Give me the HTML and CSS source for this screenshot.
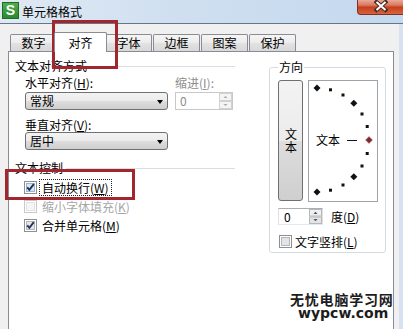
FILE: index.html
```html
<!DOCTYPE html>
<html lang="zh-CN">
<head>
<meta charset="utf-8">
<title>单元格格式</title>
<link rel="stylesheet" href="styles.css">
</head>
<body>
<div class="window">
  <div class="titlebar">
    <span class="app-icon">S</span>
    <span class="title">单元格格式</span>
    <div class="close">
      <svg width="46" height="15" viewBox="0 0 46 15">
        <path d="M19.5 2 L28.5 10 M28.5 2 L19.5 10" stroke="#4a2a24" stroke-width="4" stroke-linecap="square"/>
        <path d="M19.5 2 L28.5 10 M28.5 2 L19.5 10" stroke="#fff" stroke-width="2"/>
      </svg>
    </div>
  </div>
  <div class="client">
    <div class="tabs">
      <div class="tab">数字</div>
      <div class="tab active">对齐</div>
      <div class="tab">字体</div>
      <div class="tab">边框</div>
      <div class="tab">图案</div>
      <div class="tab">保护</div>
    </div>
    <div class="panel">
      <div class="left">
        <div class="group-title"><span>文本对齐方式</span></div>
        <div class="field-row">
          <div class="field field-h">
            <div class="label">水平对齐(<u>H</u>):</div>
            <div class="combo"><span>常规</span><i class="arrow"></i></div>
          </div>
          <div class="field field-indent">
            <div class="label disabled">缩进(<u>I</u>):</div>
            <div class="spin spin-indent disabled">
              <span class="spin-val">0</span>
              <div class="spin-btns">
                <svg width="13" height="16" viewBox="0 0 13 16">
                  <rect x="0.5" y="0.5" width="12" height="7" fill="#f4f4f4" stroke="#d2d2d2"/>
                  <rect x="0.5" y="8.5" width="12" height="7" fill="#f4f4f4" stroke="#d2d2d2"/>
                  <path d="M4.5 5 L6.5 3 L8.5 5 Z" fill="#a8a8a8"/>
                  <path d="M4.5 11 L6.5 13 L8.5 11 Z" fill="#a8a8a8"/>
                </svg>
              </div>
            </div>
          </div>
        </div>
        <div class="field field-v">
          <div class="label">垂直对齐(<u>V</u>):</div>
          <div class="combo"><span>居中</span><i class="arrow"></i></div>
        </div>
        <div class="group-title group-title-2"><span>文本控制</span></div>
        <div class="checks">
          <div class="check-row">
            <svg class="cb" width="13" height="13" viewBox="0 0 13 13">
              <rect x="0.5" y="0.5" width="12" height="12" fill="#fff" stroke="#8e8f8f"/>
              <rect x="2.5" y="2.5" width="8" height="8" fill="#d6e8f8" stroke="#9ab4cf"/>
              <path d="M3.2 6.3 L5.4 8.8 L9.8 3.2" stroke="#1b2e58" stroke-width="1.9" fill="none"/>
            </svg>
            <span class="check-label focused">自动换行(<u>W</u>)</span>
          </div>
          <div class="check-row disabled">
            <svg class="cb" width="13" height="13" viewBox="0 0 13 13">
              <rect x="0.5" y="0.5" width="12" height="12" fill="#fff" stroke="#c8c8c8"/>
              <rect x="2.5" y="2.5" width="8" height="8" fill="#f6f6f6" stroke="#e2e2e2"/>
            </svg>
            <span class="check-label">缩小字体填充(<u>K</u>)</span>
          </div>
          <div class="check-row">
            <svg class="cb" width="13" height="13" viewBox="0 0 13 13">
              <rect x="0.5" y="0.5" width="12" height="12" fill="#fff" stroke="#8e8f8f"/>
              <rect x="2.5" y="2.5" width="8" height="8" fill="#e4e6ea" stroke="#b3b6bc"/>
              <path d="M3.2 6.3 L5.4 8.8 L9.8 3.2" stroke="#2a3450" stroke-width="1.9" fill="none"/>
            </svg>
            <span class="check-label">合并单元格(<u>M</u>)</span>
          </div>
        </div>
      </div>
      <fieldset class="direction">
        <legend>方向</legend>
        <div class="dir-main">
          <div class="vbutton"><span class="vtext">文本</span></div>
          <div class="dial">
            <svg width="68" height="119" viewBox="0 0 68 119">
              <g fill="#111">
                <polygon points="8,3.5 11.5,7 8,10.5 4.5,7"/>
                <rect x="20" y="7.3" width="3" height="3"/>
                <rect x="32.5" y="12.5" width="3" height="3"/>
                <polygon points="44.8,18.7 48.3,22.2 44.8,25.7 41.3,22.2"/>
                <rect x="51.5" y="31.5" width="3" height="3"/>
                <rect x="56.7" y="44" width="3" height="3"/>
                <rect x="56.7" y="71" width="3" height="3"/>
                <rect x="51.5" y="83.5" width="3" height="3"/>
                <polygon points="44.8,92.3 48.3,95.8 44.8,99.3 41.3,95.8"/>
                <rect x="32.5" y="102.5" width="3" height="3"/>
                <rect x="20" y="107.7" width="3" height="3"/>
                <polygon points="8,107.5 11.5,111 8,114.5 4.5,111"/>
              </g>
              <polygon points="60,55.5 63.5,59 60,62.5 56.5,59" fill="#7d2a2a" stroke="#c08080" stroke-width="0.6"/>
              <text x="7" y="63.5" class="dial-text">文本</text>
              <line x1="38" y1="59.5" x2="48" y2="59.5" stroke="#111" stroke-width="1"/>
            </svg>
          </div>
        </div>
        <div class="deg-row">
          <div class="spin spin-deg">
            <span class="spin-val">0</span>
            <div class="spin-btns">
              <svg width="13" height="15" viewBox="0 0 13 15">
                <rect x="0.5" y="0.5" width="12" height="6.5" fill="#f0f0f0" stroke="#b5b8bd"/>
                <rect x="0.5" y="8" width="12" height="6.5" fill="#e4e4e4" stroke="#b5b8bd"/>
                <path d="M4.5 5 L6.5 2.8 L8.5 5 Z" fill="#4d5560"/>
                <path d="M4.5 10 L6.5 12.2 L8.5 10 Z" fill="#4d5560"/>
              </svg>
            </div>
          </div>
          <span class="deg-label">度(<u>D</u>)</span>
        </div>
        <div class="check-row vert-row">
          <svg class="cb" width="13" height="13" viewBox="0 0 13 13">
            <rect x="0.5" y="0.5" width="12" height="12" fill="#fff" stroke="#8e8f8f"/>
            <rect x="2.5" y="2.5" width="8" height="8" fill="#e2e4e8" stroke="#b3b6bc"/>
          </svg>
          <span class="check-label">文字竖排(<u>L</u>)</span>
        </div>
      </fieldset>
    </div>
  </div>
  <div class="highlight highlight-tab"></div>
  <div class="highlight highlight-wrap"></div>
  <div class="watermark">
    <div class="wm-cn">无忧电脑学习网</div>
    <div class="wm-en">wypcw.com</div>
  </div>
</div>
</body>
</html>
```
FILE: styles.css
```css
* { box-sizing: border-box; }
html, body { margin: 0; padding: 0; }
body {
  width: 403px;
  height: 329px;
  overflow: hidden;
  font-family: "Noto Sans CJK SC", "Liberation Sans", sans-serif;
  font-size: 12px;
  color: #000;
  background: #f0f0f0;
}
u { text-decoration: underline; text-underline-offset: 1px; }

.window {
  position: relative;
  width: 403px;
  height: 329px;
  display: flex;
  flex-direction: column;
  overflow: hidden;
}

/* title bar */
.titlebar {
  flex: none;
  height: 24px;
  display: flex;
  align-items: flex-start;
  background: linear-gradient(to right, #dfe9f4 0%, #cfdff0 45%, #c4d8ee 100%);
  border-bottom: 1px solid #66768a;
}
.app-icon {
  margin: 2px 0 0 2px;
  width: 17px;
  height: 17px;
  background: linear-gradient(#4fae4c, #2a8a30);
  border: 1px solid #1f6d25;
  color: #fff;
  font-family: "Liberation Sans", sans-serif;
  font-weight: bold;
  font-size: 14px;
  line-height: 15px;
  text-align: center;
}
.title {
  margin: 5px 0 0 3px;
  line-height: 13px;
  font-size: 12px;
  color: #000;
}
.close {
  margin-left: auto;
  width: 46px;
  height: 16px;
  margin-top: -1px;
  border: 1px solid #7b3326;
  border-top: none;
  border-right: none;
  border-radius: 0 0 0 4px;
  background: linear-gradient(#eab2a4 0%, #dc7a60 40%, #c5401f 55%, #d8633c 100%);
  display: flex;
  align-items: flex-start;
  justify-content: center;
  padding-top: 1px;
}
.close svg { display: block; margin-left: -1px; }

/* client */
.client {
  flex: 1;
  display: flex;
  flex-direction: column;
  background: #f0f0f0;
  padding: 0 5px 0 8px;
  border-right: 4px solid #d6e2ef;
  min-height: 0;
}

/* tabs */
.tabs {
  flex: none;
  height: 27px;
  display: flex;
  align-items: flex-end;
  padding-left: 2px;
}
.tab {
  width: 47px;
  height: 17px;
  margin-right: 1px;
  border: 1px solid #898c95;
  border-bottom: none;
  border-radius: 2px 2px 0 0;
  background: linear-gradient(#f5f5f5 0%, #ececec 50%, #e2e2e2 51%, #d8d8d8 100%);
  text-align: center;
  line-height: 15px;
  font-size: 12px;
}
.tab.active {
  position: relative;
  z-index: 2;
  width: 53px;
  height: 20px;
  margin: 0 -2px -1px -4px;
  padding-top: 2px;
  background: #fff;
}

/* panel */
.panel {
  flex: 1;
  display: flex;
  align-items: flex-start;
  background: #fff;
  border: 1px solid #898c95;
  border-bottom: none;
  padding: 7px 0 0 6px;
  min-height: 0;
}
.left { width: 220px; flex: none; }

.group-title {
  display: flex;
  align-items: center;
  height: 14px;
  line-height: 14px;
}
.group-title::after {
  content: "";
  flex: 1;
  margin-left: 3px;
  border-top: 1px solid #dadde2;
}
.group-title-2 { margin-top: 11px; }

.field-row {
  display: flex;
  gap: 7px;
  margin-top: 3px;
  padding-left: 10px;
}
.field-h { width: 143px; }
.field-indent { width: 58px; }
.field-v { margin-top: 8px; padding-left: 10px; width: 153px; }
.label { line-height: 14px; height: 14px; white-space: nowrap; }
.label.disabled { color: #8d8d8d; }

.combo {
  margin-top: 2px;
  height: 18px;
  border: 1px solid #707070;
  border-radius: 3px;
  background: linear-gradient(#f3f3f3 0%, #ebebeb 50%, #dddddd 51%, #cfcfcf 100%);
  display: flex;
  align-items: center;
  justify-content: space-between;
  padding: 0 4px 0 4px;
  line-height: 16px;
}
.field-v .combo { margin-top: 0; }
.arrow {
  width: 0;
  height: 0;
  border-top: 4px solid #000;
  border-left: 3.5px solid transparent;
  border-right: 3.5px solid transparent;
  margin-top: 1px;
}

.spin {
  display: flex;
  align-items: center;
  justify-content: space-between;
  background: #fff;
  border: 1px solid #abadb3;
  border-left-color: #dfe1e6;
  border-right-color: #dfe1e6;
  border-bottom-color: #e3e9ef;
  padding: 0 0 0 4px;
}
.spin-val { line-height: 14px; }
.spin-btns { display: flex; align-items: center; }
.spin-btns svg { display: block; }
.spin-indent {
  margin-top: 2px;
  height: 18px;
  border-color: #c9c9c9;
}
.spin-indent .spin-val { color: #8d8d8d; }

.checks { margin-top: 3px; }
.check-row {
  display: flex;
  align-items: center;
  height: 19px;
  padding-left: 9px;
}
.check-row.disabled { color: #a6a6a6; }
.cb { display: block; flex: none; }
.check-label {
  margin-left: 2px;
  padding: 0 2px;
  border: 1px dotted transparent;
  line-height: 15px;
  white-space: nowrap;
}
.check-label.focused { border-color: #222; }

/* direction group */
.direction {
  flex: none;
  width: 117px;
  margin: 2px 0 0 34px;
  padding: 7px 6px 2px 8px;
  border: 1px solid #d5dbe2;
  border-radius: 3px;
  min-width: 0;
}
.direction legend {
  padding: 0 1px;
  line-height: 12px;
  font-size: 12px;
}
.dir-main {
  display: flex;
  gap: 5px;
}
.vbutton {
  width: 25px;
  height: 121px;
  border: 1px solid #707070;
  border-radius: 3px;
  background: linear-gradient(#f3f3f3 0%, #ebebeb 50%, #dddddd 51%, #cfcfcf 100%);
  display: flex;
  align-items: center;
  justify-content: center;
}
.vtext {
  writing-mode: vertical-rl;
  text-orientation: upright;
  letter-spacing: 1px;
  line-height: 14px;
  padding-top: 1px;
}
.dial {
  width: 70px;
  height: 122px;
  border: 1px solid #9da3ab;
  background: #fff;
}
.dial svg { display: block; }
.dial-text {
  font-family: "Noto Sans CJK SC", sans-serif;
  font-size: 12px;
  fill: #000;
}
.deg-row {
  display: flex;
  align-items: center;
  margin-top: 6px;
}
.spin-deg {
  width: 45px;
  height: 17px;
  padding-left: 5px;
}
.deg-label { margin-left: 8px; line-height: 14px; }
.vert-row {
  margin-top: 7px;
  height: 18px;
  padding-left: 1px;
}
.vert-row .check-label { margin-left: 0; }

/* overlays */
.highlight {
  position: absolute;
  border: 3px solid #a1262d;
  pointer-events: none;
}
.highlight-tab { left: 52px; top: 20px; width: 66px; height: 49px; }
.highlight-wrap { left: 5px; top: 169px; width: 130px; height: 31px; }

.watermark {
  position: absolute;
  left: 290px;
  top: 292px;
  color: #1d1d1d;
  text-shadow: 0 0 2px #fff;
}
.wm-cn {
  font-family: "Noto Sans CJK SC", sans-serif;
  font-weight: bold;
  font-size: 14px;
  line-height: 15px;
  letter-spacing: 0.8px;
}
.wm-en {
  margin-left: 8px;
  font-family: "DejaVu Sans", "Liberation Sans", sans-serif;
  font-weight: bold;
  font-size: 14px;
  line-height: 13px;
}
```
